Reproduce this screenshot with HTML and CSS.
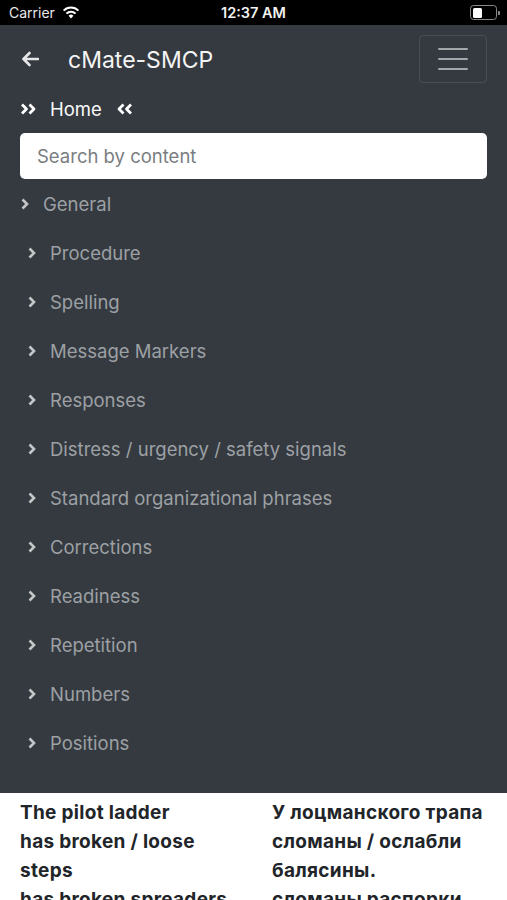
FILE: index.html
```html
<!DOCTYPE html>
<html>
<head>
<meta charset="utf-8">
<link rel="stylesheet" href="styles.css">
</head>
<body>
<div class="status">
  <div class="status-left">
    <span class="carrier">Carrier</span>
    <svg class="wifi" width="18" height="13" viewBox="0 0 18 13"><path d="M9 12.5 L6.6 9.8 A3.4 3.4 0 0 1 11.4 9.8 Z" fill="#fff"/><path d="M4.4 7.6 A6.5 6.5 0 0 1 13.6 7.6" stroke="#fff" stroke-width="2" fill="none"/><path d="M1.6 4.6 A10.5 10.5 0 0 1 16.4 4.6" stroke="#fff" stroke-width="2" fill="none"/></svg>
  </div>
  <span class="time">12:37 AM</span>
  <div class="battery"><div class="battery-body"><div class="battery-fill"></div></div><div class="battery-nub"></div></div>
</div>
<div class="panel">
  <div class="topbar">
    <svg class="back" width="18" height="16" viewBox="0 0 18 16"><path d="M17 8 H3 M8.5 2 L2.5 8 L8.5 14" stroke="#e6e6e6" stroke-width="2.6" fill="none" stroke-linecap="round" stroke-linejoin="round"/></svg>
    <span class="title">cMate-SMCP</span>
    <div class="toggler"><span></span><span></span><span></span></div>
  </div>
  <div class="crumb">
    <svg width="17" height="12" viewBox="0 0 17 12"><path d="M2 1.5 L6.5 6 L2 10.5 M9.5 1.5 L14 6 L9.5 10.5" stroke="#fff" stroke-width="2.8" fill="none" stroke-linejoin="round"/></svg>
    <span class="home">Home</span>
    <svg width="17" height="12" viewBox="0 0 17 12"><path d="M7.5 1.5 L3 6 L7.5 10.5 M15 1.5 L10.5 6 L15 10.5" stroke="#fff" stroke-width="2.8" fill="none" stroke-linejoin="round"/></svg>
  </div>
  <div class="search">Search by content</div>
  <ul class="tree">
    <li class="item root"><svg class="chev" width="8" height="12" viewBox="0 0 8 12"><path d="M1.5 1.5 L6 6 L1.5 10.5" stroke="#c4c6c8" stroke-width="2.6" fill="none"/></svg><span>General</span></li>
    <li class="item"><svg class="chev" width="8" height="12" viewBox="0 0 8 12"><path d="M1.5 1.5 L6 6 L1.5 10.5" stroke="#c4c6c8" stroke-width="2.6" fill="none"/></svg><span>Procedure</span></li>
    <li class="item"><svg class="chev" width="8" height="12" viewBox="0 0 8 12"><path d="M1.5 1.5 L6 6 L1.5 10.5" stroke="#c4c6c8" stroke-width="2.6" fill="none"/></svg><span>Spelling</span></li>
    <li class="item"><svg class="chev" width="8" height="12" viewBox="0 0 8 12"><path d="M1.5 1.5 L6 6 L1.5 10.5" stroke="#c4c6c8" stroke-width="2.6" fill="none"/></svg><span>Message Markers</span></li>
    <li class="item"><svg class="chev" width="8" height="12" viewBox="0 0 8 12"><path d="M1.5 1.5 L6 6 L1.5 10.5" stroke="#c4c6c8" stroke-width="2.6" fill="none"/></svg><span>Responses</span></li>
    <li class="item"><svg class="chev" width="8" height="12" viewBox="0 0 8 12"><path d="M1.5 1.5 L6 6 L1.5 10.5" stroke="#c4c6c8" stroke-width="2.6" fill="none"/></svg><span>Distress / urgency / safety signals</span></li>
    <li class="item"><svg class="chev" width="8" height="12" viewBox="0 0 8 12"><path d="M1.5 1.5 L6 6 L1.5 10.5" stroke="#c4c6c8" stroke-width="2.6" fill="none"/></svg><span>Standard organizational phrases</span></li>
    <li class="item"><svg class="chev" width="8" height="12" viewBox="0 0 8 12"><path d="M1.5 1.5 L6 6 L1.5 10.5" stroke="#c4c6c8" stroke-width="2.6" fill="none"/></svg><span>Corrections</span></li>
    <li class="item"><svg class="chev" width="8" height="12" viewBox="0 0 8 12"><path d="M1.5 1.5 L6 6 L1.5 10.5" stroke="#c4c6c8" stroke-width="2.6" fill="none"/></svg><span>Readiness</span></li>
    <li class="item"><svg class="chev" width="8" height="12" viewBox="0 0 8 12"><path d="M1.5 1.5 L6 6 L1.5 10.5" stroke="#c4c6c8" stroke-width="2.6" fill="none"/></svg><span>Repetition</span></li>
    <li class="item"><svg class="chev" width="8" height="12" viewBox="0 0 8 12"><path d="M1.5 1.5 L6 6 L1.5 10.5" stroke="#c4c6c8" stroke-width="2.6" fill="none"/></svg><span>Numbers</span></li>
    <li class="item"><svg class="chev" width="8" height="12" viewBox="0 0 8 12"><path d="M1.5 1.5 L6 6 L1.5 10.5" stroke="#c4c6c8" stroke-width="2.6" fill="none"/></svg><span>Positions</span></li>
  </ul>
</div>
<div class="content">
  <div class="col">The pilot ladder<br>has broken / loose<br>steps<br>has broken spreaders</div>
  <div class="col">У лоцманского трапа<br>сломаны / ослабли<br>балясины.<br>сломаны распорки</div>
</div>
</body>
</html>
```
FILE: styles.css
```css
html, body {
  margin: 0;
  padding: 0;
  background: #fff;
  font-family: Inter, "Noto Sans", sans-serif;
  height: 900px;
  overflow: hidden;
}
.status {
  height: 25px;
  background: #000;
  color: #fff;
  display: flex;
  align-items: center;
  justify-content: space-between;
  padding: 0 7px 0 9px;
  position: relative;
}
.status-left {
  display: flex;
  align-items: center;
  gap: 7px;
}
.carrier {
  font-size: 14px;
  color: #e8e8e8;
}
.wifi { margin-top: -1px; }
.time {
  position: absolute;
  left: 0;
  right: 0;
  text-align: center;
  font-size: 14.5px;
  font-weight: 600;
  color: #f2f2f2;
  pointer-events: none;
}
.battery {
  display: flex;
  align-items: center;
}
.battery-body {
  width: 22px;
  height: 10px;
  border: 1.5px solid #8a8a8a;
  border-radius: 3.5px;
  padding: 1.5px;
}
.battery-fill {
  width: 9px;
  height: 10px;
  background: #fff;
  border-radius: 1.5px;
}
.battery-nub {
  width: 2px;
  height: 4px;
  background: #8a8a8a;
  border-radius: 0 1px 1px 0;
  margin-left: 1px;
}
.panel {
  background: #343a40;
  height: 768px;
  padding: 10px 20px 0 20px;
  box-sizing: border-box;
  overflow: hidden;
}
.topbar {
  height: 48px;
  display: flex;
  align-items: center;
}
.back {
  margin-left: 1px;
}
.title {
  color: #f4f4f4;
  font-size: 23px;
  margin-left: 29px;
  flex: 1;
  padding-top: 2px;
}
.toggler {
  width: 66px;
  height: 46px;
  border: 1px solid rgba(255,255,255,0.1);
  border-radius: 4px;
  display: flex;
  flex-direction: column;
  align-items: center;
  justify-content: center;
  gap: 8px;
}
.toggler span {
  display: block;
  width: 30px;
  height: 2px;
  background: #a5a8ab;
  border-radius: 1px;
}
.crumb {
  margin-top: 14px;
  height: 24px;
  display: flex;
  align-items: center;
}
.home {
  color: #fafafa;
  font-size: 18.5px;
  margin: 0 14px 0 13px;
}
.search {
  margin-top: 12px;
  height: 46px;
  background: #fff;
  border-radius: 5px;
  box-sizing: border-box;
  padding: 0 17px;
  display: flex;
  align-items: center;
  font-size: 18.5px;
  color: #7a7d80;
}
.tree {
  list-style: none;
  margin: 0;
  padding: 0;
}
.item {
  height: 49px;
  display: flex;
  align-items: center;
  padding-left: 8px;
  color: #9da0a4;
  font-size: 18.5px;
}
.item.root {
  padding-left: 1px;
}
.chev {
  margin-right: 14px;
  flex: none;
}
.content {
  display: grid;
  grid-template-columns: 252px 1fr;
  padding: 5px 20px 0 20px;
  font-weight: 700;
  font-size: 19px;
  letter-spacing: 0.3px;
  line-height: 29px;
  color: #212529;
}
```
